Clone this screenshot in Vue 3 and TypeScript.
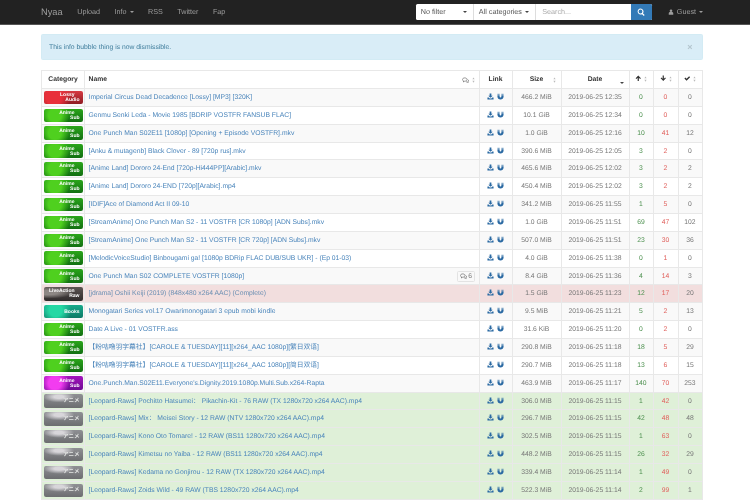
<script setup lang="ts">
type Row = {
  cat: string
  label: string[]
  name: string
  size: string
  date: string
  s: number
  l: number
  c: number
  tone?: string
  comments?: number
}

const anime = ['Anime', 'Sub']
const raw = ['アニメ']

const mk = (
  cat: string,
  label: string[],
  name: string,
  size: string,
  date: string,
  s: number,
  l: number,
  c: number,
  tone = '',
  comments?: number
): Row => ({ cat, label, name, size, date, s, l, c, tone, comments })

const rows: Row[] = [
  mk('audio', ['Lossy', 'Audio'], 'Imperial Circus Dead Decadence [Lossy] [MP3] [320K]', '466.2 MiB', '12:35', 0, 0, 0),
  mk('sub', anime, 'Genmu Senki Leda - Movie 1985 [BDRIP VOSTFR FANSUB FLAC]', '10.1 GiB', '12:34', 0, 0, 0),
  mk('sub', anime, 'One Punch Man S02E11 [1080p] [Opening + Episode VOSTFR].mkv', '1.0 GiB', '12:16', 10, 41, 12),
  mk('sub', anime, '[Anku & mutagenb] Black Clover - 89 [720p rus].mkv', '390.6 MiB', '12:05', 3, 2, 0),
  mk('sub', anime, '[Anime Land] Dororo 24-End [720p-Hi444PP][Arabic].mkv', '465.6 MiB', '12:02', 3, 2, 2),
  mk('sub', anime, '[Anime Land] Dororo 24-END [720p][Arabic].mp4', '450.4 MiB', '12:02', 3, 2, 2),
  mk('sub', anime, '[IDIF]Ace of Diamond Act II 09-10', '341.2 MiB', '11:55', 1, 5, 0),
  mk('sub', anime, '[StreamAnime] One Punch Man S2 - 11 VOSTFR [CR 1080p] [ADN Subs].mkv', '1.0 GiB', '11:51', 69, 47, 102),
  mk('sub', anime, '[StreamAnime] One Punch Man S2 - 11 VOSTFR [CR 720p] [ADN Subs].mkv', '507.0 MiB', '11:51', 23, 30, 36),
  mk('sub', anime, '[MelodicVoiceStudio] Binbougami ga! [1080p BDRip FLAC DUB/SUB UKR] - (Ep 01-03)', '4.0 GiB', '11:38', 0, 1, 0),
  mk('sub', anime, 'One Punch Man S02 COMPLETE VOSTFR [1080p]', '8.4 GiB', '11:36', 4, 14, 3, '', 6),
  mk('action', ['LiveAction', 'Raw'], '[jdrama] Oshii Keiji (2019) (848x480 x264 AAC) (Complete)', '1.5 GiB', '11:23', 12, 17, 20, 'danger'),
  mk('books', ['Books'], 'Monogatari Series vol.17 Owarimonogatari 3 epub mobi kindle', '9.5 MiB', '11:21', 5, 2, 13),
  mk('sub', anime, 'Date A Live - 01 VOSTFR.ass', '31.6 KiB', '11:20', 0, 2, 0),
  mk('sub', anime, '【粉咕噜羽字幕社】[CAROLE & TUESDAY][11][x264_AAC 1080p][繁日双语]', '290.8 MiB', '11:18', 18, 5, 29),
  mk('sub', anime, '【粉咕噜羽字幕社】[CAROLE & TUESDAY][11][x264_AAC 1080p][简日双语]', '290.7 MiB', '11:18', 13, 6, 15),
  mk('purple', anime, "One.Punch.Man.S02E11.Everyone's.Dignity.2019.1080p.Multi.Sub.x264-Rapta", '463.9 MiB', '11:17', 140, 70, 253),
  mk('raw', raw, '[Leopard-Raws] Pochitto Hatsumei： Pikachin-Kit - 76 RAW (TX 1280x720 x264 AAC).mp4', '306.0 MiB', '11:15', 1, 42, 0, 'success'),
  mk('raw', raw, '[Leopard-Raws] Mix： Meisei Story - 12 RAW (NTV 1280x720 x264 AAC).mp4', '296.7 MiB', '11:15', 42, 48, 48, 'success'),
  mk('raw', raw, '[Leopard-Raws] Kono Oto Tomare! - 12 RAW (BS11 1280x720 x264 AAC).mp4', '302.5 MiB', '11:15', 1, 63, 0, 'success'),
  mk('raw', raw, '[Leopard-Raws] Kimetsu no Yaiba - 12 RAW (BS11 1280x720 x264 AAC).mp4', '448.2 MiB', '11:15', 26, 32, 29, 'success'),
  mk('raw', raw, '[Leopard-Raws] Kedama no Gonjirou - 12 RAW (TX 1280x720 x264 AAC).mp4', '339.4 MiB', '11:14', 1, 49, 0, 'success'),
  mk('raw', raw, '[Leopard-Raws] Zoids Wild - 49 RAW (TBS 1280x720 x264 AAC).mp4', '522.3 MiB', '11:14', 2, 99, 1, 'success')
]

const navLinks = ['Upload', 'Info', 'RSS', 'Twitter', 'Fap']
</script>

<template>
  <div class="page">
    <svg class="sprite" aria-hidden="true">
      <symbol id="i-download" viewBox="0 0 16 16">
        <path d="M6 1h4v5h3l-5 5-5-5h3z" />
        <path d="M1 10h3l2 2.500h4l2-2.500h3v5H1z" />
      </symbol>
      <symbol id="i-magnet" viewBox="0 0 16 16">
        <path d="M1 1.500h5v3H1zM10 1.500h5v3h-5z" opacity="0.6" />
        <path d="M1 5.200h5V8c0 1.500.8 2.400 2 2.400s2-.9 2-2.400V5.200h5v3C15 12.400 12 15 8 15s-7-2.600-7-6.800z" />
      </symbol>
      <symbol id="i-up" viewBox="0 0 16 16">
        <path d="M8 1.500l6.500 6.500-2 2-3-3V15h-3V7l-3 3-2-2z" />
      </symbol>
      <symbol id="i-down" viewBox="0 0 16 16">
        <path d="M8 14.500L1.500 8l2-2 3 3V1h3v8l3-3 2 2z" />
      </symbol>
      <symbol id="i-check" viewBox="0 0 16 16">
        <path d="M1 8.500l2.300-2.300 3 3L12.700 3 15 5.300 6.300 14z" />
      </symbol>
      <symbol id="i-user" viewBox="0 0 16 16">
        <circle cx="8" cy="4.500" r="3.500" />
        <path d="M2 15v-3c0-2.500 1.500-4 3.500-4h5c2 0 3.500 1.500 3.500 4v3z" />
      </symbol>
      <symbol id="i-search" viewBox="0 0 16 16">
        <path d="M7 1a6 6 0 0 1 4.800 9.600l3.500 3.500-1.700 1.700-3.500-3.500A6 6 0 1 1 7 1zm0 2.200a3.800 3.800 0 1 0 0 7.600 3.800 3.800 0 0 0 0-7.600z" />
      </symbol>
      <symbol id="i-comments" viewBox="0 0 18 16">
        <path d="M7 2c3.300 0 6 1.800 6 4.200s-2.700 4.200-6 4.200l-3.500 2 .8-2.500C2.300 9.200 1 7.800 1 6.200 1 3.800 3.700 2 7 2z" fill="none" stroke="currentColor" stroke-width="1.500" />
        <path d="M14.500 6c1.500.8 2.500 2 2.500 3.400 0 1-.6 1.900-1.500 2.600l.5 2-3-1.500c-1 0-2-.2-2.800-.6" fill="none" stroke="currentColor" stroke-width="1.500" />
      </symbol>
      <symbol id="i-sort" viewBox="0 0 8 16">
        <path d="M4 1l3 5H1zM4 15l3-5H1z" />
      </symbol>
    </svg>

    <nav class="navbar">
      <div class="nav-left">
        <span class="brand">Nyaa</span>
        <span v-for="link in navLinks" :key="link" class="nav-link">
          {{ link }}<i v-if="link === 'Info'" class="caret"></i>
        </span>
      </div>
      <div class="nav-right">
        <form class="search">
          <span class="select filter">No filter<i class="caret dark"></i></span>
          <span class="select cats">All categories<i class="caret dark"></i></span>
          <span class="input">Search...</span>
          <span class="go"><svg class="icon"><use href="#i-search" /></svg></span>
        </form>
        <span class="guest">
          <svg class="icon"><use href="#i-user" /></svg>
          Guest<i class="caret"></i>
        </span>
      </div>
    </nav>

    <main class="container">
      <div class="alert">
        <span>This info bubble thing is now dismissible.</span>
        <span class="close">×</span>
      </div>

      <table class="torrents">
        <colgroup>
          <col style="width: 43px" />
          <col />
          <col style="width: 33px" />
          <col style="width: 49px" />
          <col style="width: 68px" />
          <col style="width: 24px" />
          <col style="width: 25px" />
          <col style="width: 24px" />
        </colgroup>
        <thead>
          <tr>
            <th>Category</th>
            <th class="left">
              <div class="name-head">
                <span>Name</span>
                <span class="comment-head">
                  <svg class="icon cm"><use href="#i-comments" /></svg>
                  <svg class="icon so"><use href="#i-sort" /></svg>
                </span>
              </div>
            </th>
            <th>Link</th>
            <th class="sortable">Size<svg class="icon so edge"><use href="#i-sort" /></svg></th>
            <th class="sortable">Date<i class="caret dark edge low"></i></th>
            <th><svg class="icon hd"><use href="#i-up" /></svg><svg class="icon so"><use href="#i-sort" /></svg></th>
            <th><svg class="icon hd"><use href="#i-down" /></svg><svg class="icon so"><use href="#i-sort" /></svg></th>
            <th><svg class="icon hd"><use href="#i-check" /></svg><svg class="icon so"><use href="#i-sort" /></svg></th>
          </tr>
        </thead>
        <tbody>
          <tr v-for="(row, i) in rows" :key="i" :class="[row.tone, { odd: i % 2 === 0 }]">
            <td class="cat-cell">
              <div class="badge" :class="row.cat">
                <span v-for="line in row.label" :key="line">{{ line }}</span>
              </div>
            </td>
            <td class="left">
              <div class="name-cell">
                <a class="title">{{ row.name }}</a>
                <span v-if="row.comments" class="comments">
                  <svg class="icon cm"><use href="#i-comments" /></svg>{{ row.comments }}
                </span>
              </div>
            </td>
            <td class="links">
              <svg class="icon"><use href="#i-download" /></svg>
              <svg class="icon"><use href="#i-magnet" /></svg>
            </td>
            <td>{{ row.size }}</td>
            <td>2019-06-25 {{ row.date }}</td>
            <td class="seed">{{ row.s }}</td>
            <td class="leech">{{ row.l }}</td>
            <td>{{ row.c }}</td>
          </tr>
        </tbody>
      </table>
    </main>
  </div>
</template>

<style scoped>
.page {
  font-family: "Liberation Sans", Arial, "Noto Sans CJK SC", sans-serif;
  font-size: 6.770px;
  text-rendering: geometricPrecision;
  color: #333;
  width: 750px;
  filter: blur(0.4px);
}
.sprite {
  display: none;
}
.icon {
  fill: currentColor;
  width: 8px;
  height: 8px;
}
.navbar {
  height: 24.500px;
  box-sizing: border-box;
  background: #222;
  border-bottom: 1px solid #555;
  padding: 0 41px;
  display: flex;
  justify-content: space-between;
  align-items: center;
  color: #9d9d9d;
}
.nav-left {
  display: flex;
  align-items: center;
  gap: 14.500px;
  font-size: 7.200px;
}
.brand {
  font-size: 9.300px;
}
.nav-right {
  display: flex;
  align-items: center;
  margin-right: 6px;
  font-size: 7.200px;
}
.caret {
  display: inline-block;
  margin-left: 3px;
  vertical-align: middle;
  border-top: 2px solid #9d9d9d;
  border-left: 2px solid transparent;
  border-right: 2px solid transparent;
}
.caret.dark {
  border-top-color: #444;
}
.search {
  display: flex;
  height: 16px;
  background: #fff;
  color: #555;
  border-radius: 1.500px;
  overflow: hidden;
  white-space: nowrap;
}
.select {
  display: flex;
  align-items: center;
  justify-content: space-between;
  box-sizing: border-box;
  padding: 0 6px 0 5px;
  border-right: 1px solid #ddd;
}
.filter {
  width: 58px;
}
.cats {
  width: 62.500px;
}
.input {
  box-sizing: border-box;
  width: 94.500px;
  padding-left: 6px;
  line-height: 16px;
  color: #aaa;
}
.go {
  width: 21px;
  background: #337ab7;
  color: #fff;
  display: flex;
  align-items: center;
  justify-content: center;
}
.guest {
  margin-left: 16px;
  display: flex;
  align-items: center;
  gap: 3px;
}
.guest .icon {
  width: 6px;
  height: 6px;
}
.guest .caret {
  margin-left: 0;
}
.container {
  width: 661.500px;
  margin-left: 41px;
}
.alert {
  margin-top: 9.500px;
  height: 25.500px;
  box-sizing: border-box;
  padding: 1px 7px 0;
  background: #d9edf7;
  border: 1px solid #d3ebf4;
  border-radius: 1.500px;
  color: #3f7d9c;
  display: flex;
  align-items: center;
  justify-content: space-between;
}
.close {
  color: #b4c6cf;
  font-size: 9px;
  font-weight: bold;
  margin-right: 2px;
}
.torrents {
  margin-top: 10.500px;
  width: 100%;
  table-layout: fixed;
  border-collapse: collapse;
  background: #fff;
}
th,
td {
  box-sizing: border-box;
  border: 1px solid #e8e8e8;
  padding: 1px 0 0;
  text-align: center;
  overflow: hidden;
  white-space: nowrap;
  line-height: 8px;
}
th {
  height: 18px;
  font-weight: bold;
  color: #333;
}
td {
  height: 17.870px;
  color: #777;
}
.left {
  text-align: left;
  padding-left: 3.500px;
  padding-right: 3.500px;
}
.name-head,
.name-cell {
  display: flex;
  justify-content: space-between;
  align-items: center;
}
.comment-head {
  display: flex;
  align-items: center;
  gap: 1px;
  color: #444;
}
.cm {
  width: 7px;
  height: 6.500px;
  color: #555;
}
.so {
  width: 3px;
  height: 6px;
  fill: #bbb;
  margin-left: 2.500px;
}
.hd {
  width: 6.500px;
  height: 6.500px;
  fill: #333;
}
.sortable {
  position: relative;
}
.edge {
  position: absolute;
  right: 5px;
  top: 6px;
}
.low {
  top: 11px;
}
.odd td {
  background: #f9f9f9;
}
.danger td {
  background: #f2dede;
}
.success td {
  background: #dff0d8;
}
.title {
  color: #4a85bb;
}
.danger .title {
  color: #6b8fb3;
}
.comments {
  display: flex;
  align-items: center;
  gap: 1.500px;
  padding: 1px 2px;
  border: 1px solid #e3e3e3;
  border-radius: 1.500px;
  line-height: 7px;
}
.links {
  color: #2b6aa3;
}
.links .icon {
  width: 7px;
  height: 7px;
  margin: 0 1.800px;
}
.seed {
  color: #4e9150;
}
.leech {
  color: #e0605c;
}
.cat-cell {
  padding: 0 1.500px;
}
.badge {
  height: 13.400px;
  border-radius: 2px;
  box-sizing: border-box;
  padding: 1px 3px 0 0;
  display: flex;
  flex-direction: column;
  justify-content: center;
  align-items: flex-end;
  color: #fff;
  font-size: 5px;
  font-weight: bold;
  line-height: 5px;
}
.badge span:first-child {
  margin-right: 5px;
}
.badge span:only-child {
  margin-right: 0;
}
.audio {
  background: radial-gradient(circle at 25% 50%, #e8303a 0 25%, transparent 55%), linear-gradient(#d63a42, #8f1b22);
}
.sub {
  background: radial-gradient(circle at 28% 50%, #4fd01f 0 22%, transparent 50%), linear-gradient(#2aa51a, #126f12);
}
.action {
  background: radial-gradient(ellipse at 12% 40%, #8d8784 0 18%, transparent 50%), linear-gradient(#5c5553, #2f2b2b);
}
.books {
  background: radial-gradient(circle at 30% 40%, #26d8a4 0 22%, transparent 55%), linear-gradient(#17a98a, #0e7a66);
}
.purple {
  background: radial-gradient(circle at 28% 50%, #f23cf0 0 22%, transparent 50%), linear-gradient(#a314bc, #6f0a94);
}
.raw {
  background: radial-gradient(ellipse 40% 40% at 38% 20%, #d8d6da 0 30%, transparent 100%), linear-gradient(#8f9094, #6c6d70);
  font-size: 5.500px;
  color: #e4e6e4;
}
</style>

<style>
html,
body {
  overflow: hidden;
  background: #fff;
}
</style>
